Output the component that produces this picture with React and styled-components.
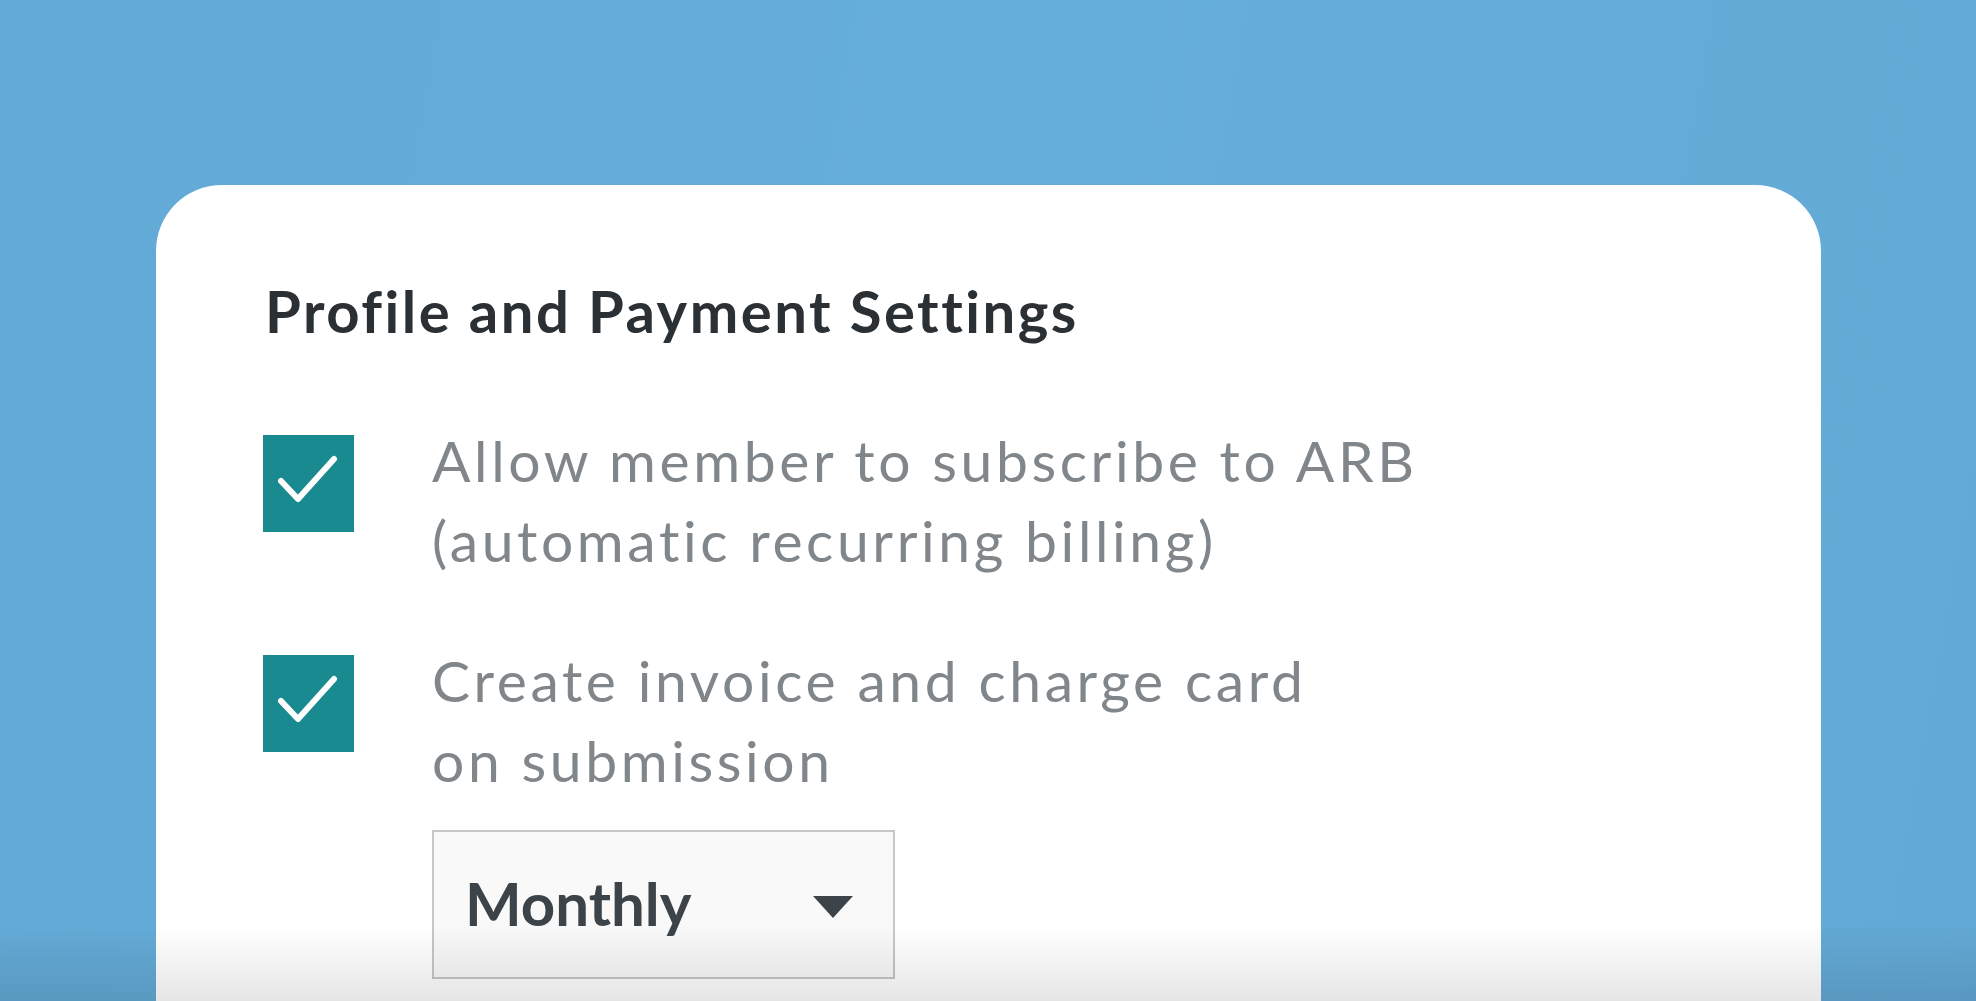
import React from "react";
import styled, { createGlobalStyle } from "styled-components";

const Global = createGlobalStyle`
  html, body { margin: 0; padding: 0; }
  body {
    background: #64acd7;
    height: 1001px;
    overflow: hidden;
    font-family: Lato, "Liberation Sans", sans-serif;
  }
`;

const Page = styled.div`
  height: 1001px;
  padding: 185px 155px 0 156px;
  box-sizing: border-box;
  background: linear-gradient(100deg, #63aad6 0%, #65aed9 50%, #63a9d5 100%);
`;

const Card = styled.section`
  background: #ffffff;
  border-radius: 66px 66px 0 0;
  height: 816px;
  padding: 97px 0 0 109px;
  box-sizing: border-box;
`;

const Title = styled.h1`
  margin: 0;
  font-family: Lato, "Liberation Sans", sans-serif;
  font-weight: 700;
  font-size: 58px;
  line-height: 58px;
  color: #2b3034;
  letter-spacing: 2.5px;
`;

const Options = styled.div`
  display: flex;
  flex-direction: column;
  gap: 60px;
  margin-top: 80px;
`;

const Row = styled.div`
  display: grid;
  grid-template-columns: 91px auto;
  column-gap: 78px;
  margin-left: -2px;
`;

const Box = styled.span`
  width: 91px;
  height: 97px;
  margin-top: 15px;
  background: #198a8f;
  display: flex;
`;

const Body = styled.div`
  display: flex;
  flex-direction: column;
  align-items: flex-start;
`;

const Label = styled.div`
  font-family: Lato, "Liberation Sans", sans-serif;
  font-weight: 400;
  font-size: 57px;
  line-height: 80px;
  color: #80868a;
  letter-spacing: 3.6px;
`;

const Select = styled.div`
  margin-top: 30px;
  width: 463px;
  height: 149px;
  box-sizing: border-box;
  border: 2px solid #c4c8c8;
  background: #f9f9f9;
  display: flex;
  align-items: center;
  justify-content: space-between;
  padding: 0 40px 0 31px;
`;

const SelectText = styled.span`
  font-family: Lato, "Liberation Sans", sans-serif;
  font-weight: 700;
  font-size: 60px;
  line-height: 60px;
  color: #3d4449;
  margin-top: -3px;
`;

const Caret = styled.span`
  width: 0;
  height: 0;
  border-left: 20px solid transparent;
  border-right: 20px solid transparent;
  border-top: 22px solid #3d4449;
  margin-top: 4px;
`;

const Shade = styled.div`
  position: fixed;
  left: 0;
  right: 0;
  bottom: 0;
  height: 75px;
  pointer-events: none;
  background: linear-gradient(to bottom, rgba(0, 0, 0, 0) 0%, rgba(0, 0, 0, 0.03) 30%, rgba(0, 0, 0, 0.1) 100%);
`;

const Check = () => (
  <svg width="91" height="97" viewBox="0 0 91 97">
    <path
      d="M18 46 L35 64 L71 24"
      fill="none"
      stroke="#ffffff"
      strokeWidth="6"
      strokeLinecap="round"
      strokeLinejoin="round"
    />
  </svg>
);

export default function App() {
  return (
    <>
      <Global />
      <Page>
        <Card>
          <Title>Profile and Payment Settings</Title>
          <Options>
            <Row>
              <Box>
                <Check />
              </Box>
              <Body>
                <Label>
                  Allow member to subscribe to ARB
                  <br />
                  (automatic recurring billing)
                </Label>
              </Body>
            </Row>
            <Row>
              <Box>
                <Check />
              </Box>
              <Body>
                <Label>
                  Create invoice and charge card
                  <br />
                  on submission
                </Label>
                <Select>
                  <SelectText>Monthly</SelectText>
                  <Caret />
                </Select>
              </Body>
            </Row>
          </Options>
        </Card>
      </Page>
      <Shade />
    </>
  );
}
